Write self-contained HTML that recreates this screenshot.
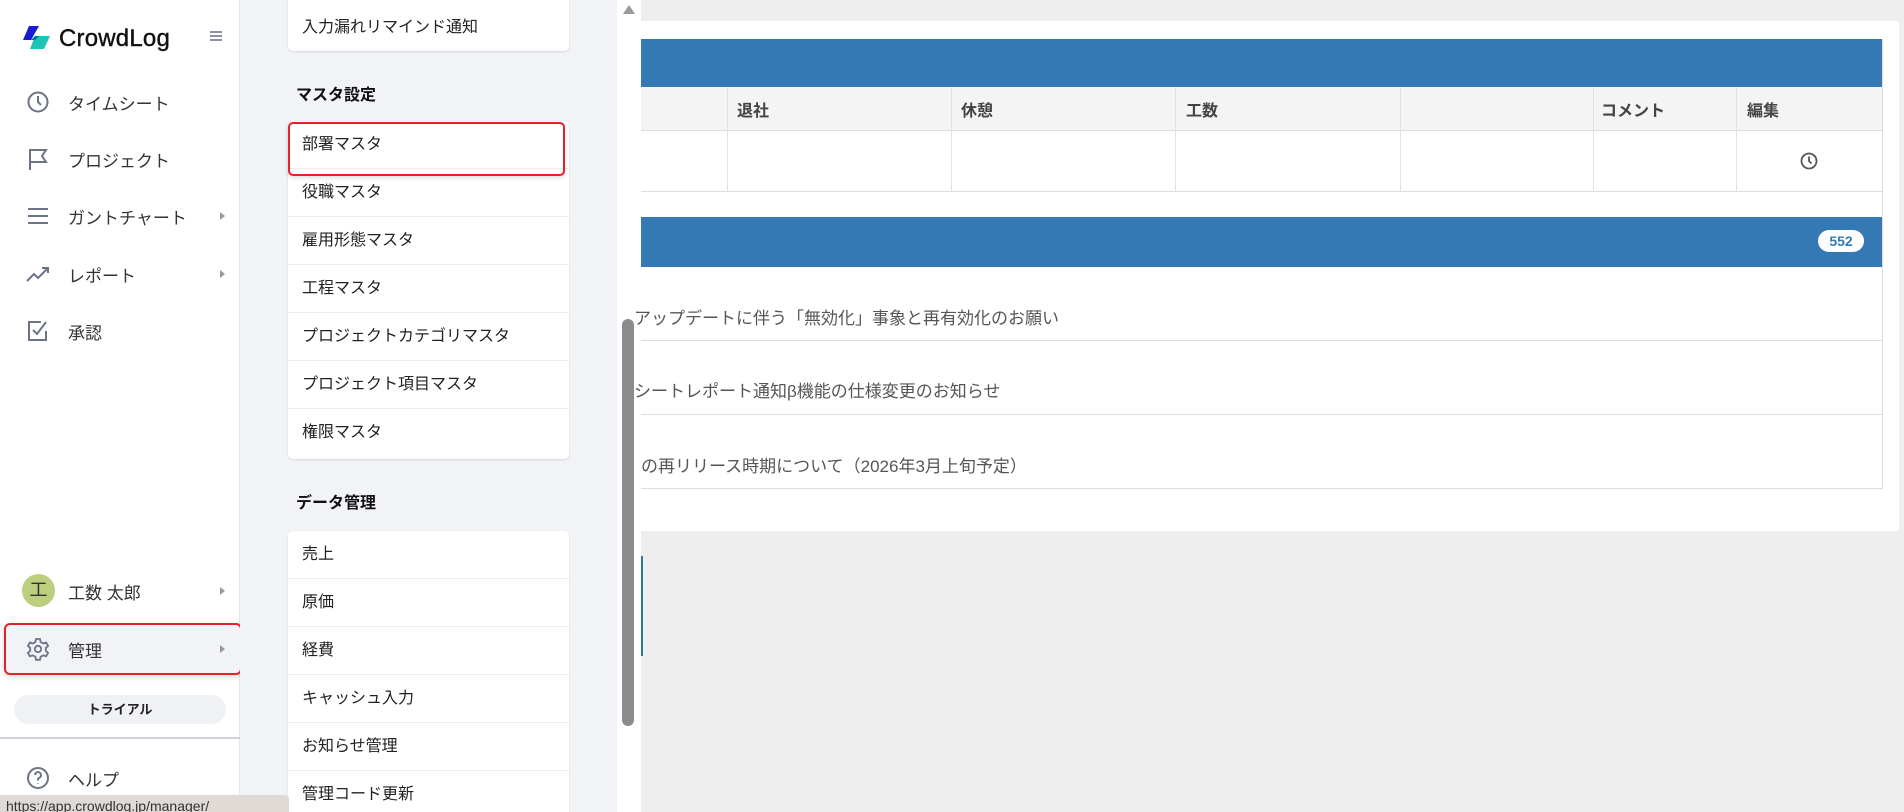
<!DOCTYPE html>
<html style="overflow:hidden;width:1904px;height:812px"><head><meta charset="utf-8"><style>
*{box-sizing:border-box;margin:0;padding:0}
body{width:1904px;height:812px;overflow:hidden;position:relative;background:#eeeeee;font-family:"Liberation Sans","Noto Sans CJK JP",sans-serif;color:#222}
.abs{position:absolute}
#side{left:0;top:0;width:240px;height:812px;background:#fff;border-right:1px solid #e4e6ea}
.mi{position:absolute;left:0;width:240px;height:40px;display:flex;align-items:center;font-size:17px;color:#333}
.mi svg{position:absolute;left:26px}
.mi span{position:absolute;left:68px}
.arr{position:absolute;left:220px;width:0;height:0;border-left:5px solid #999;border-top:4px solid transparent;border-bottom:4px solid transparent}
#sub{left:240px;top:0;width:377px;height:812px;background:#f2f3f7}
.card{position:absolute;left:288px;width:281px;background:#fff;border-radius:5px;box-shadow:0 1px 2px rgba(0,0,0,.12)}
.row{height:48px;border-bottom:1px solid #ececec;font-size:16px;padding-left:14px;line-height:48px;color:#222}
.h{position:absolute;left:296px;font-size:16px;font-weight:bold;color:#111}
#sb{left:617px;top:0;width:24px;height:812px;background:#fff}
.mc{left:641px;top:21px;width:1258px;height:510px;background:#fff}
.blue{background:#3479b4;position:absolute;left:641px;width:1241px}
.colh{position:absolute;top:97px;font-size:16px;font-weight:bold;color:#444}
.vl{position:absolute;width:1px;background:#e2e2e2;top:87px;height:105px}
.nt{position:absolute;left:634px;font-size:17px;color:#555}
</style></head><body>
<div id="side" class="abs">
  <svg class="abs" style="left:22px;top:26px" width="30" height="24" viewBox="0 0 30 24"><path d="M7 0h10l-8 14H1z" fill="#1a1ad0"/><path d="M13 10h15l-6 13H8z" fill="#1fc4b8"/><path d="M9 14l4-4h4l-4 4z" fill="#0a6aa8"/></svg>
  <div class="abs" style="left:59px;top:25px;font-size:24px;color:#111;letter-spacing:0.2px;-webkit-text-stroke:0.4px #111">CrowdLog</div>
  <div class="abs" style="left:210px;top:31px;width:12px;height:2px;background:#8a93a6;box-shadow:0 4px 0 #8a93a6,0 8px 0 #8a93a6"></div>
  <div class="mi" style="top:82px"><svg width="24" height="24" viewBox="0 0 24 24" fill="none" stroke="#6b7385" stroke-width="2"><circle cx="12" cy="12" r="9.5"/><path d="M12 6v6l3 3"/></svg><span>タイムシート</span></div>
  <div class="mi" style="top:139px"><svg width="24" height="24" viewBox="0 0 24 24" fill="none" stroke="#6b7385" stroke-width="2"><path d="M4 23V3h16l-4 6 4 6H4"/></svg><span>プロジェクト</span></div>
  <div class="mi" style="top:196px"><svg width="24" height="24" viewBox="0 0 24 24" fill="none" stroke="#6b7385" stroke-width="2"><path d="M2 5h20M2 12h20M2 19h20"/></svg><span>ガントチャート</span><i class="arr"></i></div>
  <div class="mi" style="top:254px"><svg width="24" height="24" viewBox="0 0 24 24" fill="none" stroke="#6b7385" stroke-width="2"><path d="M1 19l7-7 4 4 9-9M16 6h6v5"/></svg><span>レポート</span><i class="arr"></i></div>
  <div class="mi" style="top:311px"><svg width="24" height="24" viewBox="0 0 24 24" fill="none" stroke="#6b7385" stroke-width="2"><path d="M20 12v9H3V3h12"/><path d="M7 11l4 4 9-12"/></svg><span>承認</span></div>
  <div class="mi" style="top:571px"><div class="abs" style="left:22px;top:3px;width:33px;height:33px;border-radius:50%;background:#bccf7f;text-align:center;line-height:33px;font-size:18px">工</div><span>工数 太郎</span><i class="arr"></i></div>
  <div class="abs" style="left:4px;top:623px;width:238px;height:52px;border:2px solid #e8202a;border-radius:6px;background:#f2f3f7;box-shadow:0 2px 6px rgba(0,0,0,.15)"></div>
  <div class="mi" style="top:629px"><svg width="24" height="24" viewBox="0 0 24 24" fill="none" stroke="#6b7385" stroke-width="1.8"><circle cx="12" cy="12" r="3.2"/><path d="M10 2h4l.6 3 2.6 1.5 2.9-1 2 3.4-2.3 2v3l2.3 2-2 3.4-2.9-1-2.6 1.5-.6 3h-4l-.6-3-2.6-1.5-2.9 1-2-3.4 2.3-2v-3l-2.3-2 2-3.4 2.9 1L9.4 5z"/></svg><span>管理</span><i class="arr"></i></div>
  <div class="abs" style="left:14px;top:695px;width:212px;height:29px;border-radius:15px;background:#f0f1f4;text-align:center;line-height:29px;font-size:13px;font-weight:bold">トライアル</div>
  <div class="abs" style="left:0;top:737px;width:240px;height:2px;background:#cfd2d8"></div>
  <div class="mi" style="top:758px"><svg width="24" height="24" viewBox="0 0 24 24" fill="none" stroke="#6b7385" stroke-width="2"><circle cx="12" cy="12" r="10"/><path d="M9 9a3 3 0 1 1 4 3c-1 .5-1 1-1 2.5M12 17.5v.5"/></svg><span>ヘルプ</span></div>
</div>
<div id="sub" class="abs"></div>
<div class="card" style="top:-4px;height:55px"><div class="row" style="border:none;padding-top:8px;line-height:48px">入力漏れリマインド通知</div></div>
<div class="h" style="top:81px">マスタ設定</div>
<div class="card" style="top:121px;height:338px">
  <div class="row">部署マスタ</div><div class="row">役職マスタ</div><div class="row">雇用形態マスタ</div><div class="row">工程マスタ</div><div class="row">プロジェクトカテゴリマスタ</div><div class="row">プロジェクト項目マスタ</div><div class="row" style="border:none">権限マスタ</div>
</div>
<div class="abs" style="left:288px;top:122px;width:277px;height:54px;border:2px solid #e8202a;border-radius:5px;box-shadow:0 2px 5px rgba(0,0,0,.12)"></div>
<div class="h" style="top:489px">データ管理</div>
<div class="card" style="top:531px;height:281px;border-bottom-left-radius:0;border-bottom-right-radius:0">
  <div class="row">売上</div><div class="row">原価</div><div class="row">経費</div><div class="row">キャッシュ入力</div><div class="row">お知らせ管理</div><div class="row" style="border:none">管理コード更新</div>
</div>
<div id="sb" class="abs"></div>
<div class="abs" style="left:623px;top:5px;width:0;height:0;border-bottom:9px solid #999;border-left:6px solid transparent;border-right:6px solid transparent"></div>
<div class="abs" style="left:622px;top:319px;width:12px;height:407px;border-radius:6px;background:#8c8c8c"></div>
<div class="abs mc"></div>
<div class="blue" style="top:39px;height:48px"></div>
<div class="abs" style="left:641px;top:87px;width:1241px;height:44px;background:#f4f4f4;border-bottom:1px solid #ddd"></div>
<div class="abs" style="left:641px;top:191px;width:1241px;height:1px;background:#ddd"></div>
<div class="vl" style="left:727px"></div><div class="vl" style="left:951px"></div><div class="vl" style="left:1175px"></div><div class="vl" style="left:1400px"></div><div class="vl" style="left:1593px"></div><div class="vl" style="left:1736px"></div>
<div class="colh" style="left:737px">退社</div><div class="colh" style="left:961px">休憩</div><div class="colh" style="left:1186px">工数</div><div class="colh" style="left:1601px">コメント</div><div class="colh" style="left:1747px">編集</div>
<svg class="abs" style="left:1800px;top:152px" width="18" height="18" viewBox="0 0 18 18" fill="none" stroke="#555" stroke-width="1.8"><circle cx="9" cy="9" r="7.5"/><path d="M9 4.5V9l2.5 2.5"/></svg>
<div class="blue" style="top:217px;height:50px"></div>
<div class="abs" style="left:1818px;top:230px;width:46px;height:22px;border-radius:11px;background:#fff;color:#3479b4;font-size:14px;font-weight:bold;text-align:center;line-height:22px">552</div>
<div class="nt" style="top:304px">アップデートに伴う「無効化」事象と再有効化のお願い</div>
<div class="abs" style="left:641px;top:340px;width:1241px;height:1px;background:#ddd"></div>
<div class="nt" style="top:377px">シートレポート通知β機能の仕様変更のお知らせ</div>
<div class="abs" style="left:641px;top:414px;width:1241px;height:1px;background:#ddd"></div>
<div class="nt" style="top:452px;left:641px">の再リリース時期について（2026年3月上旬予定）</div>
<div class="abs" style="left:641px;top:488px;width:1241px;height:1px;background:#ddd"></div>
<div class="abs" style="left:1882px;top:39px;width:1px;height:450px;background:#ddd"></div>
<div class="abs" style="left:641px;top:556px;width:2px;height:100px;background:#2a7a9a"></div>
<div class="abs" style="left:0;top:795px;width:289px;height:17px;background:#dfdad6;border-top-right-radius:4px;font-size:14px;color:#333;padding-left:6px;line-height:22px;overflow:hidden">https://app.crowdlog.jp/manager/</div>
</body></html>
